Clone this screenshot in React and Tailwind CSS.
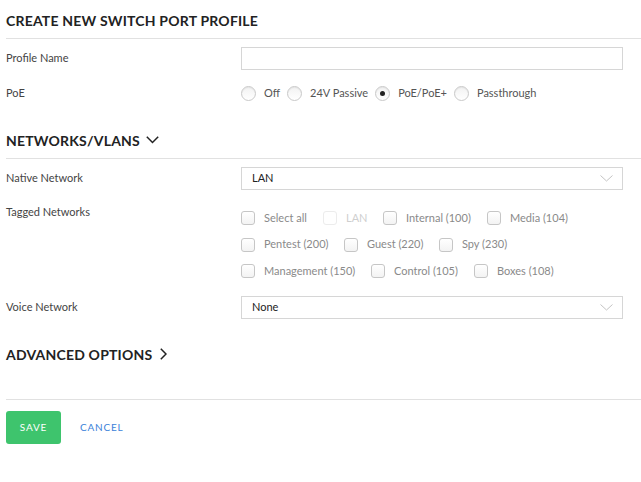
import React from 'react';

function Radio({ checked, label }) {
  return (
    <div className="flex items-center">
      <span className="w-[15px] h-[15px] rounded-full border border-[#c9c9c9] bg-gradient-to-b from-[#f2f2f2] to-white flex items-center justify-center shadow-[inset_0_1px_1px_rgba(0,0,0,0.06)]">
        {checked && <span className="w-[5px] h-[5px] rounded-full bg-[#222]" />}
      </span>
      <span className="ml-[8px] mr-[7px] text-[11px] text-[#555]">{label}</span>
    </div>
  );
}

function Check({ label, disabled, width }) {
  return (
    <div className={`flex items-center ${width}`}>
      <span
        className={`w-[14px] h-[14px] rounded-[3px] border ${
          disabled ? 'border-[#ececec] bg-white' : 'border-[#c6c6c6] bg-gradient-to-b from-white to-[#f3f3f3]'
        }`}
      />
      <span className={`ml-[9px] text-[11px] ${disabled ? 'text-[#cfcfcf]' : 'text-[#8a8a8a]'}`}>{label}</span>
    </div>
  );
}

function Select({ value }) {
  return (
    <div className="w-[382px] h-[23px] border border-[#d6d6d6] bg-white flex items-center justify-between pl-[10px] pr-[9px]">
      <span className="text-[11px] text-[#222]">{value}</span>
      <svg width="13" height="7" viewBox="0 0 13 7" fill="none">
        <path d="M0.5 0.5 L6.5 6 L12.5 0.5" stroke="#c4c4c4" strokeWidth="1" />
      </svg>
    </div>
  );
}

function Row({ label, children, className = '' }) {
  return (
    <div className={`flex items-center ${className}`}>
      <div className="w-[235px] text-[11px] text-[#444]">{label}</div>
      {children}
    </div>
  );
}

export default function App() {
  return (
    <div className="w-[641px] h-[482px] bg-white pl-[6px] font-['Lato','Open_Sans',sans-serif]">
      <h1 className="pt-[12px] h-[29px] leading-[17px] text-[14px] font-bold text-[#222] tracking-[0.2px]">
        CREATE NEW SWITCH PORT PROFILE
      </h1>
      <div className="mt-[9px] h-px bg-[#e1e1e1]" />

      <Row label="Profile Name" className="mt-[8px]">
        <div className="w-[382px] h-[23px] border border-[#d6d6d6] bg-white" />
      </Row>

      <Row label="PoE" className="mt-[15px] h-[16px]">
        <div className="flex items-center">
          <Radio label="Off" />
          <Radio label="24V Passive" />
          <Radio label="PoE/PoE+" checked />
          <Radio label="Passthrough" />
        </div>
      </Row>

      <div className="mt-[30px] h-[18px] flex items-center">
        <h2 className="text-[14px] font-bold text-[#222] tracking-[0.2px]">NETWORKS/VLANS</h2>
        <svg className="ml-[6px]" width="13" height="8" viewBox="0 0 13 8" fill="none">
          <path d="M0.8 0.8 L6.5 6.5 L12.2 0.8" stroke="#222" strokeWidth="1.5" />
        </svg>
      </div>
      <div className="mt-[9px] h-px bg-[#e1e1e1]" />

      <Row label="Native Network" className="mt-[8px]">
        <Select value="LAN" />
      </Row>

      <div className="mt-[18px] flex items-start">
        <div className="w-[235px] text-[11px] text-[#444] leading-[14px] mt-[-3px]">Tagged Networks</div>
        <div className="flex flex-col gap-[6.5px]">
          <div className="flex items-center h-[20px]">
            <Check label="Select all" width="w-[82px]" />
            <Check label="LAN" disabled width="w-[60px]" />
            <Check label="Internal (100)" width="w-[104px]" />
            <Check label="Media (104)" />
          </div>
          <div className="flex items-center h-[20px]">
            <Check label="Pentest (200)" width="w-[103px]" />
            <Check label="Guest (220)" width="w-[95px]" />
            <Check label="Spy (230)" />
          </div>
          <div className="flex items-center h-[20px]">
            <Check label="Management (150)" width="w-[130px]" />
            <Check label="Control (105)" width="w-[103px]" />
            <Check label="Boxes (108)" />
          </div>
        </div>
      </div>

      <Row label="Voice Network" className="mt-[15px]">
        <Select value="None" />
      </Row>

      <div className="mt-[26px] h-[18px] flex items-center">
        <h2 className="text-[14px] font-bold text-[#222] tracking-[0.2px]">ADVANCED OPTIONS</h2>
        <svg className="ml-[8px]" width="7" height="12" viewBox="0 0 7 12" fill="none">
          <path d="M0.8 0.8 L6 6 L0.8 11.2" stroke="#222" strokeWidth="1.5" />
        </svg>
      </div>

      <div className="mt-[36px] h-px bg-[#e1e1e1]" />

      <div className="mt-[11px] flex items-center">
        <button className="w-[55px] h-[33px] rounded-[3px] bg-[#3ec46d] text-white text-[10px] tracking-[0.8px]">
          SAVE
        </button>
        <button className="ml-[19px] text-[10px] text-[#3b82d9] tracking-[0.8px]">CANCEL</button>
      </div>
    </div>
  );
}
